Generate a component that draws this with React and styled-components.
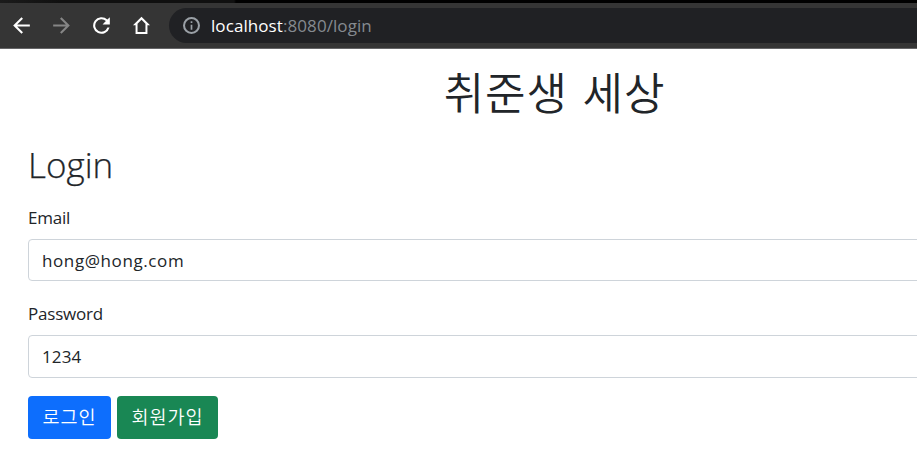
import React from "react";
import styled, { createGlobalStyle } from "styled-components";

const GlobalStyle = createGlobalStyle`
  * { box-sizing: border-box; }
  body { margin: 0; background: #fff; overflow: hidden; }
`;

const latin = `"Open Sans", "Noto Sans CJK KR", sans-serif`;

const Window = styled.div`
  width: 100%;
  height: 452px;
  overflow: hidden;
  color: #212529;
  font-family: ${latin};
`;

const TabStrip = styled.div`
  height: 3px;
  background: linear-gradient(90deg, #1b1b1b 0, #101010 60px, #101010 234px, #000 236px);
`;

const Toolbar = styled.header`
  display: flex;
  align-items: center;
  height: 46px;
  padding: 0 0 1px 9px;
  background: #353535;
  border-bottom: 1px solid #656567;
`;

const NavButton = styled.button`
  display: flex;
  flex: none;
  width: 25px;
  height: 25px;
  margin-right: 15px;
  padding: 0;
  border: 0;
  background: none;
  color: ${(p) => (p.$muted ? "#868686" : "#fff")};
  svg { width: 25px; height: 25px; fill: currentColor; }
`;

const AddressBar = styled.div`
  display: flex;
  flex: 1;
  align-items: center;
  height: 35px;
  padding-left: 14px;
  border-radius: 18px 0 0 18px;
  background: #202124;
  svg { width: 17px; height: 17px; fill: #9aa0a6; }
`;

const Url = styled.span`
  margin: 2px 0 0 11px;
  color: #858a90;
  font-size: 17px;
  line-height: 24px;
  letter-spacing: 0.08px;
`;

const Host = styled.span`
  color: #fff;
`;

const Page = styled.main`
  padding: 13px 0 0 28px;
`;

const Title = styled.h1`
  width: 1053px;
  margin: 0;
  font: 350 44px/58px "Noto Sans CJK KR", sans-serif;
  letter-spacing: 0.9px;
  word-spacing: 4px;
  text-align: center;
`;

const Heading = styled.h2`
  margin: 23px 0 0;
  font-size: 35px;
  font-weight: 300;
  line-height: 44px;
  -webkit-text-stroke: 0.25px #212529;
`;

const Field = styled.div`
  display: flex;
  flex-direction: column;
  margin-top: ${(p) => p.$gap}px;
`;

const Label = styled.label`
  height: 27px;
  margin-bottom: 8px;
  font-size: 17px;
  line-height: 27px;
  letter-spacing: -0.2px;
`;

const Input = styled.input`
  width: 1053px;
  height: ${(p) => p.$height}px;
  padding: 0 13px;
  border: 1px solid #ced4da;
  border-radius: 4px;
  outline: 0;
  background: #fff;
  color: #212529;
  font: 17px ${latin};
  letter-spacing: ${(p) => p.$track}px;
`;

const Actions = styled.div`
  display: flex;
  gap: 6px;
  margin-top: 18px;
`;

const Button = styled.button`
  width: ${(p) => p.$width}px;
  height: 43px;
  padding: 0 0 2px;
  border: 0;
  border-radius: 4px;
  background: ${(p) => p.$color};
  color: #fff;
  font: 350 18.5px/27px "Noto Sans CJK KR", sans-serif;
  letter-spacing: 1px;
  white-space: nowrap;
`;

const icons = {
  back: "M20 11H7.83l5.59-5.59L12 4l-8 8 8 8 1.41-1.41L7.83 13H20z",
  forward: "M4 11h12.17l-5.59-5.59L12 4l8 8-8 8-1.41-1.41L16.17 13H4z",
  reload: "M17.65 6.35A8 8 0 1 0 19.73 14h-2.08A6 6 0 1 1 16.22 7.78L13 11h7V4z",
  home: "M12 3.6 3.8 11.8H6.3V20.2H17.7V11.8H20.2zM12 6.4 15.8 10.2V18.3H8.2V10.2z",
  info: "M11 7h2v2h-2zm0 4h2v6h-2zm1-9a10 10 0 1 0 0 20 10 10 0 0 0 0-20zm0 17.6a7.6 7.6 0 1 1 0-15.2 7.6 7.6 0 0 1 0 15.2z",
};

const Icon = ({ name, box = "0 0 24 24" }) => (
  <svg viewBox={box} aria-hidden="true">
    <path fillRule="evenodd" d={icons[name]} />
  </svg>
);

export default function App() {
  return (
    <Window>
      <GlobalStyle />
      <TabStrip />
      <Toolbar>
        <NavButton aria-label="Back"><Icon name="back" /></NavButton>
        <NavButton aria-label="Forward" $muted><Icon name="forward" /></NavButton>
        <NavButton aria-label="Reload"><Icon name="reload" /></NavButton>
        <NavButton aria-label="Home"><Icon name="home" /></NavButton>
        <AddressBar>
          <Icon name="info" box="2 2 20 20" />
          <Url><Host>localhost</Host>:8080/login</Url>
        </AddressBar>
      </Toolbar>
      <Page>
        <Title>취준생 세상</Title>
        <Heading>Login</Heading>
        <Field $gap={17}>
          <Label htmlFor="email">Email</Label>
          <Input id="email" defaultValue="hong@hong.com" $height={42} $track={0.6} />
        </Field>
        <Field $gap={19}>
          <Label htmlFor="password">Password</Label>
          <Input id="password" defaultValue="1234" $height={43} $track={0.15} />
        </Field>
        <Actions>
          <Button $width={83} $color="#0d6efd">로그인</Button>
          <Button $width={101} $color="#198754">회원가입</Button>
        </Actions>
      </Page>
    </Window>
  );
}
